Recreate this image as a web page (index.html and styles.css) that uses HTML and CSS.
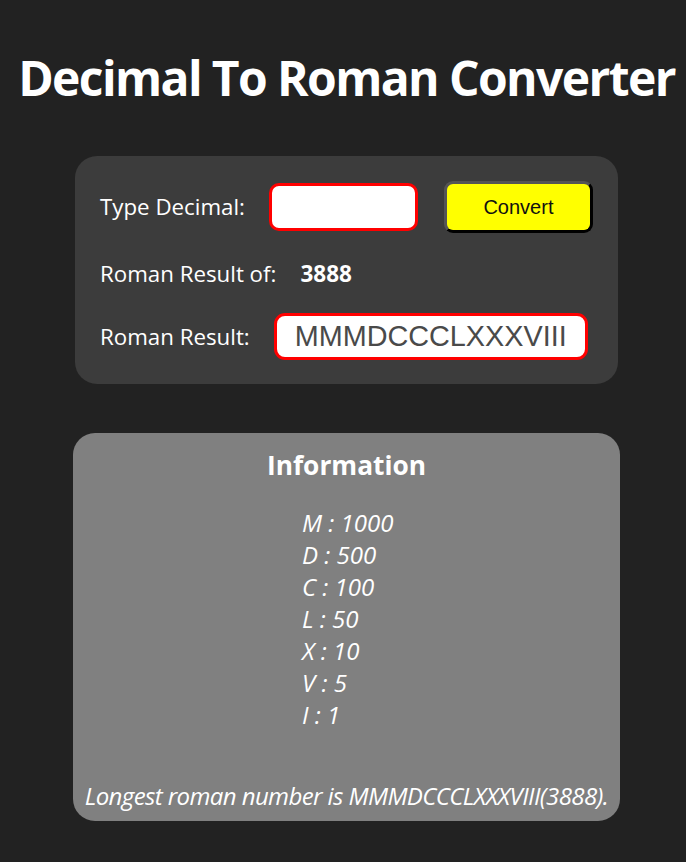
FILE: index.html
```html
<!DOCTYPE html>
<html lang="en">
<head>
<meta charset="utf-8">
<title>Decimal To Roman Converter</title>
<link rel="stylesheet" href="styles.css">
</head>
<body>
<main class="page">
  <h1 class="title">Decimal To Roman Converter</h1>
  <section class="converter">
    <div class="row">
      <label class="label" for="dec">Type Decimal:</label>
      <input class="dec-input" id="dec" type="text">
      <button class="convert-btn" type="button">Convert</button>
    </div>
    <div class="row row-text">
      <span class="label">Roman Result of:</span>
      <span class="result-num">3888</span>
    </div>
    <div class="row">
      <span class="label">Roman Result:</span>
      <div class="output">MMMDCCCLXXXVIII</div>
    </div>
  </section>
  <section class="info">
    <h2 class="info-title">Information</h2>
    <div class="values">
      <div>M : 1000</div>
      <div>D : 500</div>
      <div>C : 100</div>
      <div>L : 50</div>
      <div>X : 10</div>
      <div>V : 5</div>
      <div>I : 1</div>
    </div>
    <p class="note">Longest roman number is MMMDCCCLXXXVIII(3888).</p>
  </section>
</main>
</body>
</html>
```
FILE: styles.css
```css
html, body {
  margin: 0;
  background: #222222;
}
body {
  font-family: "Open Sans", "Noto Sans", sans-serif;
  font-size: 22.5px;
  color: #ffffff;
  padding-left: 7px;
}
.page {
  display: flex;
  flex-direction: column;
  align-items: center;
  padding-top: 46px;
}
.title {
  margin: 0;
  font-size: 48px;
  font-weight: 700;
  line-height: 64px;
  letter-spacing: -1.6px;
  white-space: nowrap;
}
.converter {
  margin-top: 46px;
  width: 543px;
  box-sizing: border-box;
  background: #3c3c3c;
  border-radius: 22px;
  padding: 25px 25px 24px;
  display: flex;
  flex-direction: column;
  gap: 24px;
}
.row {
  display: flex;
  align-items: center;
  gap: 24px;
}
.row-text {
  margin-top: 1px;
  margin-bottom: -1px;
}
.label {
  font-size: 22.3px;
  line-height: 32px;
  white-space: nowrap;
}
.dec-input {
  width: 149px;
  height: 48px;
  box-sizing: border-box;
  border: 3px solid #ff0000;
  border-radius: 10px;
  background: #ffffff;
  outline: none;
  margin: 0;
  flex: none;
}
.convert-btn {
  width: 149px;
  height: 52px;
  margin-left: 2px;
  box-sizing: border-box;
  background: #ffff00;
  border: 3px outset #555555;
  border-right-color: #000000;
  border-bottom-color: #000000;
  border-radius: 9px;
  font-family: "Liberation Sans", Arial, sans-serif;
  font-size: 20px;
  color: #111111;
  flex: none;
}
.result-num {
  font-weight: 700;
  line-height: 32px;
}
.output {
  width: 314px;
  height: 47px;
  box-sizing: border-box;
  border: 3px solid #ff0000;
  border-radius: 11px;
  background: #ffffff;
  color: #4a4a4a;
  font-family: "Liberation Sans", Arial, sans-serif;
  font-size: 28.8px;
  display: flex;
  align-items: center;
  justify-content: center;
  flex: none;
}
.info {
  margin-top: 49px;
  width: 547px;
  box-sizing: border-box;
  background: #808080;
  border-radius: 22px;
  padding: 13px 0 9px;
  display: flex;
  flex-direction: column;
}
.info-title {
  margin: 0;
  text-align: center;
  font-size: 26.3px;
  font-weight: 700;
  line-height: 38px;
}
.values {
  margin-top: 23px;
  padding-left: 229px;
  font-size: 24px;
  font-style: italic;
  line-height: 32px;
}
.note {
  margin: 49px 0 0;
  text-align: center;
  font-size: 24px;
  font-style: italic;
  line-height: 32px;
  letter-spacing: -0.6px;
  white-space: nowrap;
}
```
